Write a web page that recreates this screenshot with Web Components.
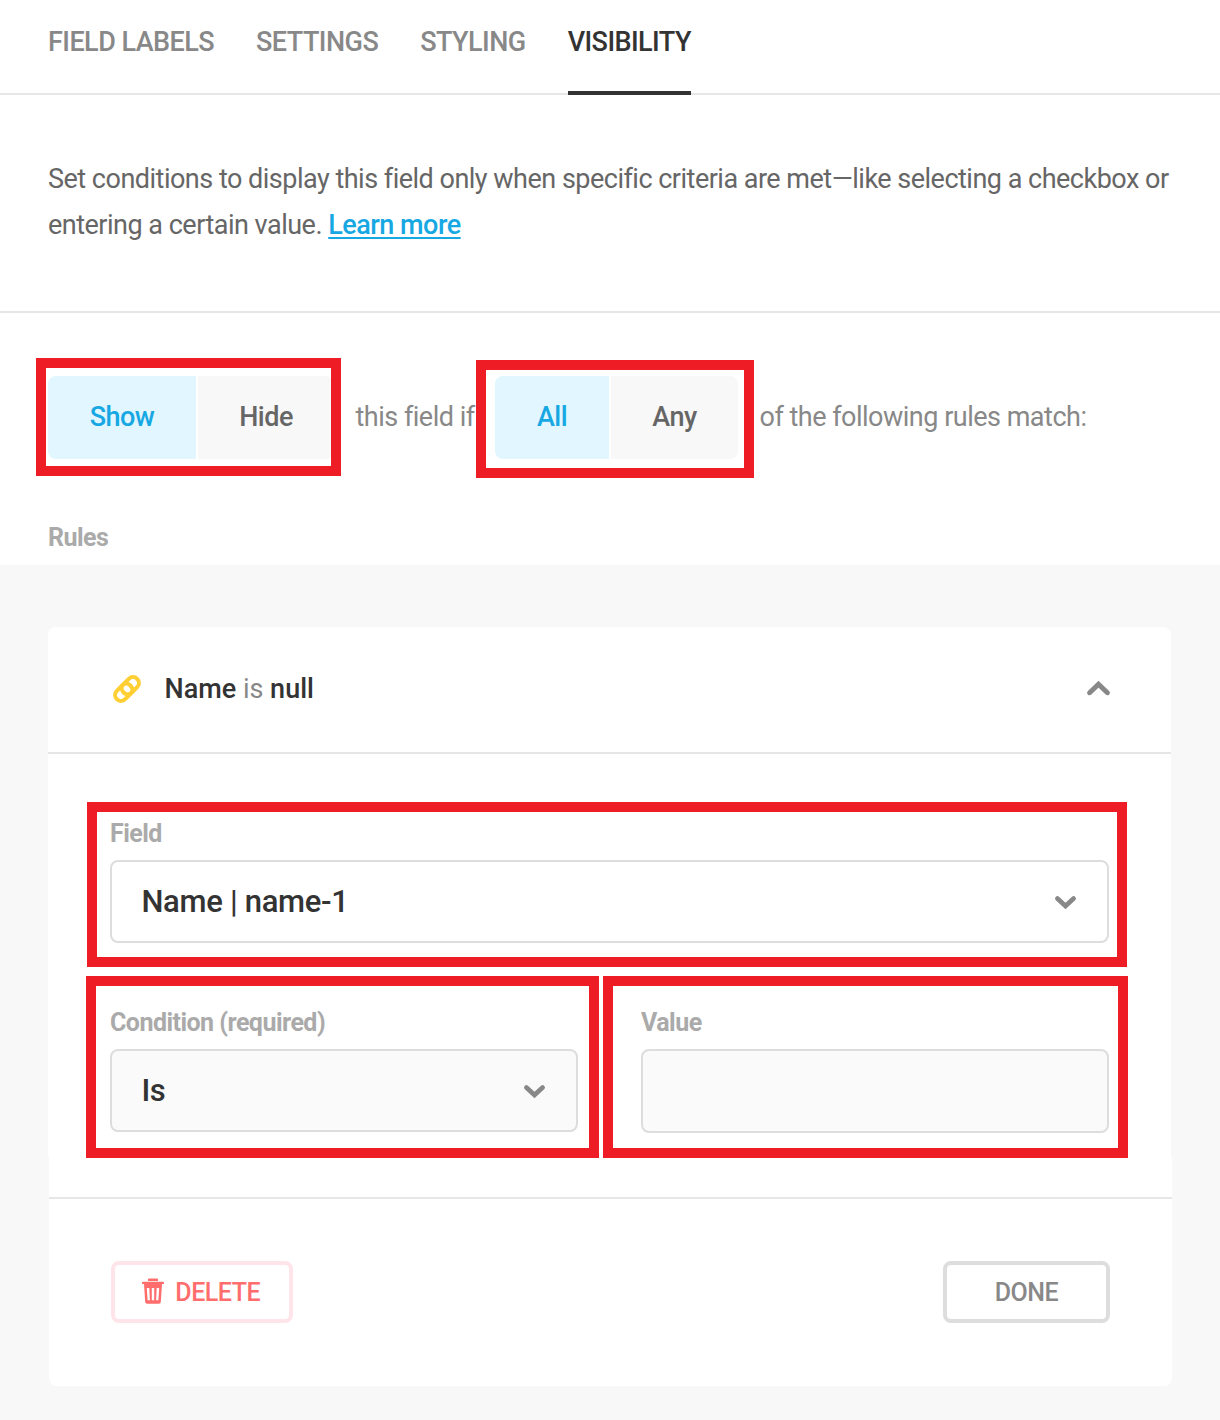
<!DOCTYPE html>
<html lang="en">
<head>
<meta charset="utf-8">
<title>Visibility</title>
<style>
  html, body { margin: 0; background: #fff; }
  body { font-family: Roboto, "Liberation Sans", sans-serif; }
</style>
</head>
<body>
<visibility-page></visibility-page>
<script>
const define = (name, html) => {
  const t = document.createElement('template');
  t.innerHTML = html;
  customElements.define(name, class extends HTMLElement {
    constructor() {
      super();
      this.attachShadow({ mode: 'open' }).append(t.content.cloneNode(true));
    }
  });
};

define('nav-tab', `<style>
  :host { display: block; height: 91px; line-height: 84px; font-size: 27px; font-weight: 500; letter-spacing: -.55px; color: #888; white-space: nowrap; border-bottom: 4px solid transparent; }
  :host([active]) { color: #333; border-bottom-color: #333; }
</style><slot></slot>`);

define('tab-bar', `<style>
  :host { display: flex; gap: 42px; box-sizing: border-box; height: 95px; padding: 0 48px; box-shadow: inset 0 -2px #e6e6e6; }
</style><slot></slot>`);

define('page-intro', `<style>
  :host { display: block; padding: 61px 48px 63px; border-bottom: 2px solid #e6e6e6; font-size: 27px; line-height: 46px; letter-spacing: -.505px; color: #666; white-space: nowrap; }
  a { color: #17a8e3; font-weight: 500; text-decoration: underline; text-decoration-thickness: 2px; text-underline-offset: 3px; }
</style><div><slot name="one"></slot></div><div><slot name="two"></slot> <a><slot name="link"></slot></a></div>`);

define('seg-option', `<style>
  :host { display: block; height: 83px; line-height: 83px; text-align: center; background: #f8f8f8; color: #666; font-size: 27px; font-weight: 500; letter-spacing: -.5px; }
  :host(:first-child) { border-radius: 8px 0 0 8px; }
  :host(:last-child) { border-radius: 0 8px 8px 0; }
  :host([active]) { background: #e1f6ff; color: #17a8e3; }
</style><slot></slot>`);

define('seg-group', `<style>
  :host { display: flex; gap: 2px; flex: none; }
</style><slot></slot>`);

define('rule-filter', `<style>
  :host { display: flex; padding: 63px 48px 0; color: #888; font-size: 27px; line-height: 83px; letter-spacing: -.5px; white-space: nowrap; }
</style><slot></slot>`);

define('form-label', `<style>
  :host { display: block; font-size: 25px; line-height: 30px; font-weight: 700; letter-spacing: -.53px; color: #aaa; white-space: nowrap; }
</style><slot></slot>`);

define('icon-chevron', `<style>
  :host { display: block; width: 21px; height: 13px; flex: none; margin-top: 2px; }
  svg { display: block; overflow: visible; }
</style><svg width="21" height="13" viewBox="0 0 21 13" fill="none" stroke="#888" stroke-width="4.7" stroke-linecap="round"><path d="M2.4 2.5 10.5 10 18.6 2.5"/></svg>`);

define('icon-chevron-up', `<style>
  :host { display: block; width: 23px; height: 15px; flex: none; }
  svg { display: block; overflow: visible; }
</style><svg width="23" height="15" viewBox="0 0 23 15" fill="none" stroke="#888" stroke-width="5" stroke-linecap="round"><path d="M2.6 11.700 11.500 3.300 20.400 11.700"/></svg>`);

define('icon-link', `<style>
  :host { display: block; width: 28px; height: 28px; flex: none; }
  svg { display: block; overflow: visible; }
</style><svg width="28" height="28" viewBox="-14 -14 28 28" fill="none" stroke="#ffcf33" stroke-width="4"><g transform="rotate(-45)"><rect x="-14.4" y="-5.9" width="19.3" height="11.8" rx="5.9"/><rect x="-4.9" y="-5.9" width="19.3" height="11.8" rx="5.9"/></g></svg>`);

define('icon-trash', `<style>
  :host { display: block; width: 22px; height: 26px; flex: none; margin-bottom: 2px; }
  svg { display: block; }
</style><svg width="22" height="26" viewBox="0 0 22 26"><path fill="#ff6d6d" fill-rule="evenodd" d="M7 .5h8a1 1 0 0 1 1 1V3H6V1.500a1 1 0 0 1 1-1ZM1 3.700h20a1 1 0 0 1 1 1V6h-2l-1.200 18a2 2 0 0 1-2 1.800H5.200a2 2 0 0 1-2-1.800L2 6H0V4.700a1 1 0 0 1 1-1ZM4.800 10l.8 12.300h2.300L7.300 10Zm5 0v12.300h2.400V10Zm4.900 0-.6 12.300h2.300l.8-12.300Z"/></svg>`);

define('form-control', `<style>
  :host { display: flex; align-items: center; justify-content: space-between; box-sizing: border-box; height: 83px; border: 2px solid #ddd; border-radius: 8px; padding: 0 31px 0 29.4px; background: #fafafa; color: #333; font-size: 31px; font-weight: 500; letter-spacing: -.3px; white-space: nowrap; }
  :host([open]) { background: #fff; }
  :host([input]) { height: 84px; }
</style><slot></slot>`);

define('form-field', `<style>
  :host { display: flex; flex-direction: column; gap: 11px; }
</style><form-label><slot name="label"></slot></form-label><slot></slot>`);

define('action-button', `<style>
  :host { display: flex; align-items: center; justify-content: center; gap: 11.4px; box-sizing: border-box; height: 62px; border: 4px solid #ddd; border-radius: 8px; color: #888; font-size: 25px; font-weight: 500; letter-spacing: -.5px; }
  :host([danger]) { border-color: #ffe5e9; color: #ff6d6d; padding-right: 2px; }
  span { padding-top: 1px; }
</style><slot name="icon"></slot><span><slot></slot></span>`);

define('rule-card', `<style>
  :host { display: block; }
  header { display: flex; align-items: center; justify-content: space-between; box-sizing: border-box; width: 1123px; height: 127px; padding: 0 61px 2px 65px; background: #fff; border-bottom: 2px solid #e6e6e6; border-radius: 8px 8px 0 0; }
  .body { box-sizing: border-box; width: 1123px; height: 403px; padding: 65px 62px 0; background: #fff; }
  footer { box-sizing: border-box; width: 1123px; height: 229px; margin-left: 1px; padding-top: 40px; background: #fff; border-radius: 0 0 8px 8px; }
  .actions { display: flex; justify-content: space-between; border-top: 2px solid #e6e6e6; padding: 62px 62px 0; }
</style><header><slot name="head"></slot></header><div class="body"><slot></slot></div><footer><div class="actions"><slot name="actions"></slot></div></footer>`);

define('rule-title', `<style>
  :host { display: flex; align-items: center; gap: 23.5px; padding-top: 1px; font-size: 27px; color: #888; white-space: nowrap; }
  b { font-weight: 500; color: #333; }
</style><icon-link></icon-link><span><b>Name</b> is <b>null</b></span>`);

/* Red annotation frame laid over the form; geometry comes from its style attribute. */
define('mark-frame', `<style>
  :host { display: block; position: absolute; box-sizing: border-box; border: 10px solid #ee1c24; pointer-events: none; }
</style>`);

define('visibility-page', `<style>
  :host { display: block; position: relative; width: 1220px; height: 1420px; overflow: hidden; background: #fff; }
  .rules { padding: 64px 48px 0; height: 42px; }
  .panel { background: #f8f8f8; box-sizing: border-box; height: 855px; padding: 62px 48px 0; }
  .t1 { width: 139.5px; margin-left: 21.5px; }
  .t2 { margin-left: 21.5px; }
  .row { display: grid; grid-template-columns: 468px 468px; gap: 63px; margin-top: 65px; align-items: start; }
</style>
<tab-bar>
  <nav-tab>FIELD LABELS</nav-tab><nav-tab>SETTINGS</nav-tab><nav-tab>STYLING</nav-tab><nav-tab active>VISIBILITY</nav-tab>
</tab-bar>
<page-intro>
  <span slot="one">Set conditions to display this field only when specific criteria are met—like selecting a checkbox or</span>
  <span slot="two">entering a certain value.</span>
  <span slot="link">Learn more</span>
</page-intro>
<rule-filter>
  <seg-group><seg-option active style="width:148px">Show</seg-option><seg-option style="width:136px">Hide</seg-option></seg-group>
  <span class="t1">this field if</span>
  <seg-group><seg-option active style="width:114px">All</seg-option><seg-option style="width:127px">Any</seg-option></seg-group>
  <span class="t2">of the following rules match:</span>
</rule-filter>
<div class="rules"><form-label>Rules</form-label></div>
<div class="panel">
  <rule-card>
    <rule-title slot="head"></rule-title>
    <icon-chevron-up slot="head"></icon-chevron-up>
    <form-field><span slot="label">Field</span><form-control open><span>Name | name-1</span><icon-chevron></icon-chevron></form-control></form-field>
    <div class="row">
      <form-field><span slot="label">Condition (required)</span><form-control><span>Is</span><icon-chevron></icon-chevron></form-control></form-field>
      <form-field><span slot="label">Value</span><form-control input></form-control></form-field>
    </div>
    <action-button slot="actions" danger style="width:182px"><icon-trash slot="icon"></icon-trash>DELETE</action-button>
    <action-button slot="actions" style="width:167px">DONE</action-button>
  </rule-card>
</div>
<mark-frame style="left:36px;top:358px;width:305px;height:118px"></mark-frame>
<mark-frame style="left:476px;top:360px;width:278px;height:118px"></mark-frame>
<mark-frame style="left:87px;top:802px;width:1040px;height:165px"></mark-frame>
<mark-frame style="left:86px;top:976px;width:513px;height:182px"></mark-frame>
<mark-frame style="left:603px;top:976px;width:525px;height:182px"></mark-frame>`);
</script>
</body>
</html>
